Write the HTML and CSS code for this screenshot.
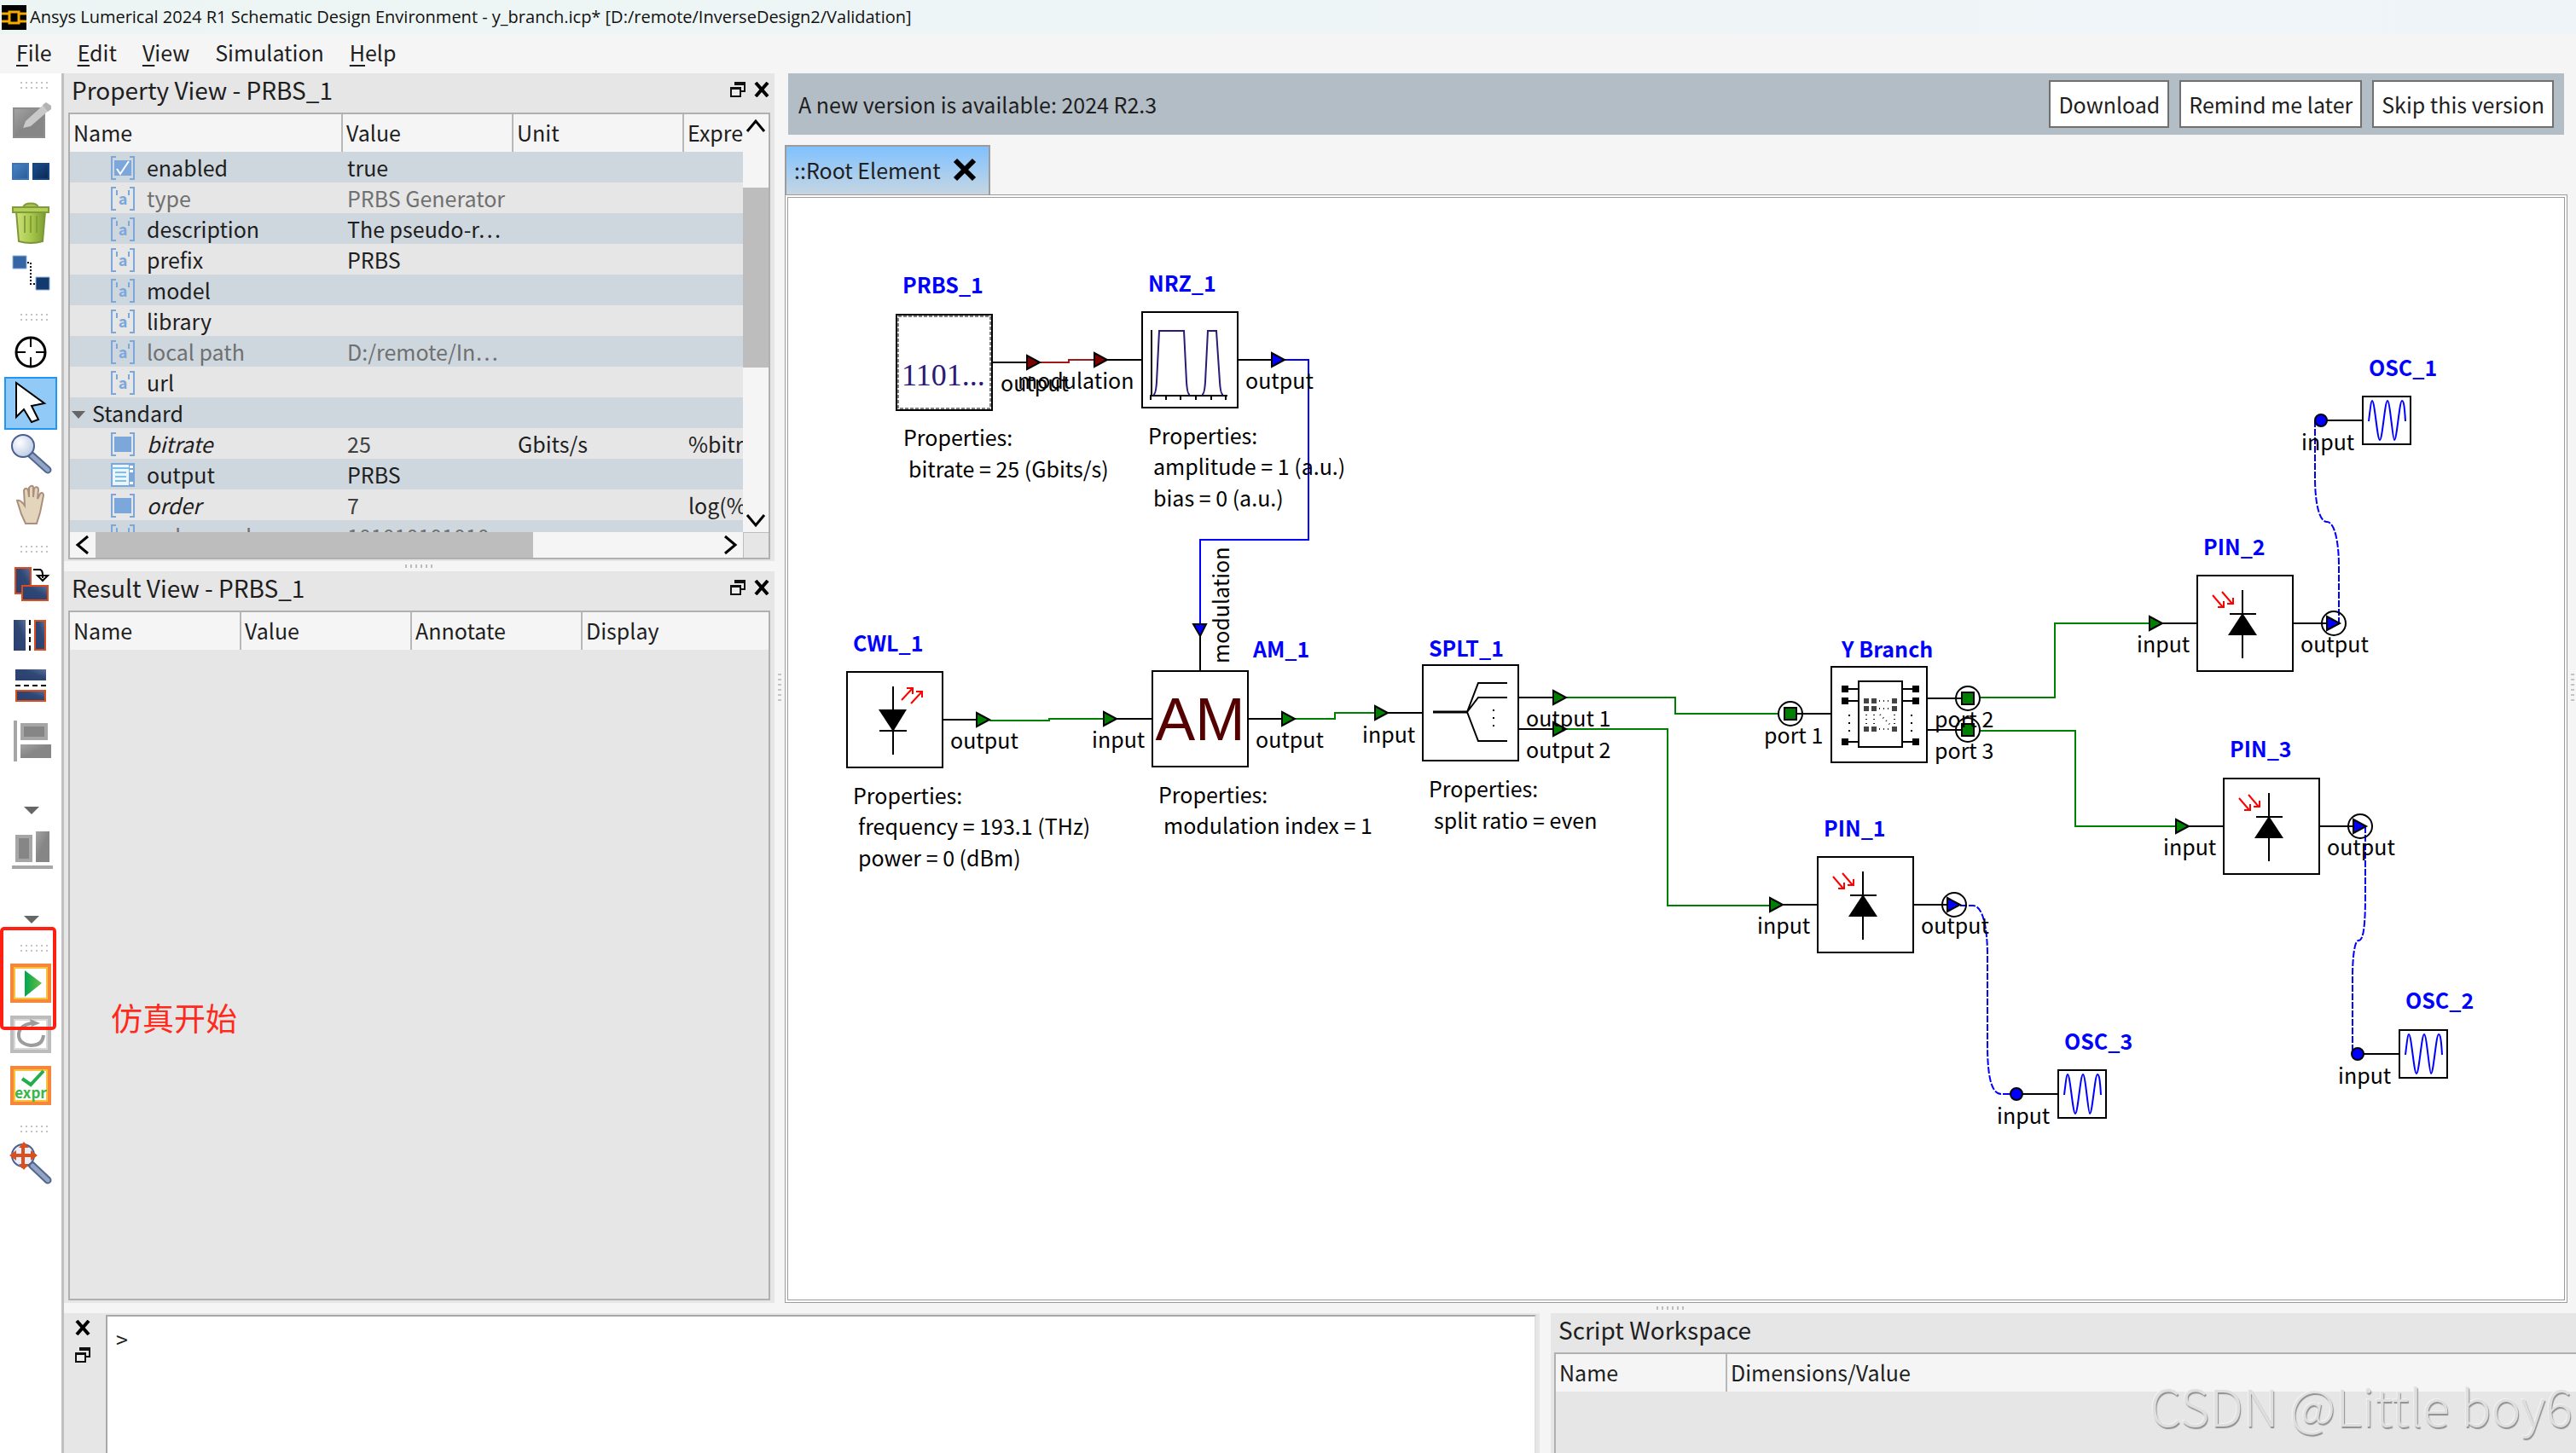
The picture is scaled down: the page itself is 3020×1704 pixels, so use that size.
FILE: index.html
```html
<!DOCTYPE html>
<html lang="en">
<head>
<meta charset="utf-8">
<title>Ansys Lumerical 2024 R1 Schematic Design Environment</title>
<link rel="stylesheet" href="styles.css">
</head>
<body>
<svg class="sprite" aria-hidden="true">
  <defs>
    <linearGradient id="g-blue-light" x1="0" y1="0" x2="1" y2="1"><stop offset="0" stop-color="#4a86c8"/><stop offset="1" stop-color="#2b5a97"/></linearGradient>
    <linearGradient id="g-blue-dark" x1="0" y1="0" x2="1" y2="1"><stop offset="0" stop-color="#1c4f8f"/><stop offset="1" stop-color="#0a2750"/></linearGradient>
    <linearGradient id="g-navy" x1="0" y1="1" x2="1" y2="0"><stop offset="0" stop-color="#2a3f6e"/><stop offset="0.6" stop-color="#2f4775"/><stop offset="1" stop-color="#5b7098"/></linearGradient>
    <linearGradient id="g-grey" x1="0" y1="0" x2="1" y2="1"><stop offset="0" stop-color="#a4a4a4"/><stop offset="0.5" stop-color="#868686"/><stop offset="1" stop-color="#868686"/></linearGradient>
    <linearGradient id="g-play" x1="0" y1="0" x2="1" y2="0"><stop offset="0" stop-color="#00a651"/><stop offset="1" stop-color="#6cbf45"/></linearGradient>
    <linearGradient id="g-bin" x1="0" y1="0" x2="1" y2="0"><stop offset="0" stop-color="#cfe07a"/><stop offset="0.5" stop-color="#a9c94c"/><stop offset="1" stop-color="#7d9c33"/></linearGradient>
    <radialGradient id="g-lens" cx="0.35" cy="0.35" r="0.7"><stop offset="0" stop-color="#ffffff"/><stop offset="1" stop-color="#bccbe6"/></radialGradient>
  </defs>
  <symbol id="ico-text" viewBox="0 0 28 28">
    <path d="M6 1H1v26h5M22 1h5v26h-5" fill="none" stroke="#7ba7db" stroke-width="2"/>
    <path d="M7 4v6M21 4v6" stroke="#7ba7db" stroke-width="2"/>
    <text x="14" y="21" text-anchor="middle" font-size="18" font-weight="700" fill="#7ba7db">a</text>
  </symbol>
  <symbol id="ico-num" viewBox="0 0 28 28">
    <path d="M6 1H1v26h5M22 1h5v26h-5" fill="none" stroke="#7ba7db" stroke-width="2"/>
    <path d="M4 5h20v18H4z" fill="#7ba7db"/>
  </symbol>
  <symbol id="ico-check" viewBox="0 0 28 28">
    <path d="M6 1H1v26h5M22 1h5v26h-5" fill="none" stroke="#7ba7db" stroke-width="2"/>
    <path d="M4 5h20v18H4z" fill="#7ba7db"/>
    <path d="M7 15l4 6L21 6" fill="none" stroke="#fff" stroke-width="2"/>
  </symbol>
  <symbol id="ico-list" viewBox="0 0 28 28">
    <path d="M1 1h26v26H1z" fill="#eaf5fd" stroke="#7ba7db" stroke-width="2"/>
    <path d="M1 6h20M5 11h13M5 16h13M5 21h13" stroke="#7cc0ea" stroke-width="2"/>
    <path d="M21 1h6v26h-6z" fill="#7ba7db"/><path d="M22 3h4v3h-4zM22 8h4v3h-4zM22 22h4v3h-4z" fill="#fff"/>
  </symbol>
  <symbol id="ico-float" viewBox="0 0 18 18">
    <path d="M6 1h11v10h-5" fill="none" stroke="#111" stroke-width="2"/><path d="M5 0h13v4H5z" fill="#111"/>
    <path d="M1 7h11v10H1z" fill="#eee" stroke="#111" stroke-width="2"/><path d="M0 6h13v3H0z" fill="#111"/>
  </symbol>
  <symbol id="ico-close" viewBox="0 0 18 18"><path d="M2 1l14 16M16 1L2 17" stroke="#000" stroke-width="4"/></symbol>
  <symbol id="ico-chev" viewBox="0 0 24 24"><path d="M2 18L12 6l10 12" fill="none" stroke="#000" stroke-width="3"/></symbol>
</svg>

<header class="titlebar">
  <svg width="29" height="29" viewBox="0 0 29 29" aria-hidden="true"><path d="M0 0h29v29H0z"/><path d="M0 10h8M0 19h8M21 10h8M21 19h8" stroke="#f5a800" stroke-width="3"/><path d="M9 8h11v13H9z" fill="#000" stroke="#f5a800" stroke-width="3"/></svg>
  <span>Ansys Lumerical 2024 R1 Schematic Design Environment - y_branch.icp* [D:/remote/InverseDesign2/Validation]</span>
</header>
<nav class="menubar">
  <button><u>F</u>ile</button><button><u>E</u>dit</button><button><u>V</u>iew</button><button>Simulation</button><button><u>H</u>elp</button>
</nav>

<div class="workspace">
  <aside class="toolbar" aria-label="Tools">
    <div class="group">
      <span class="grip"></span>
      <button aria-label="Edit"><svg viewBox="0 0 60 60"><path d="M10 16h36v34H10z" fill="url(#g-grey)" stroke="#8d8d8d" stroke-width="2"/><path d="M21 39l3-8 22-20 7 6-23 20z" fill="#c9c9c9"/><path d="M44 12l4-3 6 4 0 4-4 3z" fill="#b3b3b3"/></svg></button>
      <button aria-label="Duplicate"><svg viewBox="0 0 60 60"><path d="M9 21h18v18H9z" fill="url(#g-blue-light)" stroke="#3b73b5" stroke-width="2"/><path d="M33 21h18v18H33z" fill="url(#g-blue-dark)" stroke="#174482" stroke-width="2"/></svg></button>
      <button aria-label="Delete"><svg viewBox="0 0 60 60"><path d="M21 12c2-6 16-6 18 0z" fill="#a9c257" stroke="#7f9b3a" stroke-width="2"/><path d="M13 17h34l-3 35q-14 4-28 0z" fill="url(#g-bin)" stroke="#7a9636" stroke-width="2"/><path d="M9 12h42v6H9z" fill="#b4cf58" stroke="#7f9b3a" stroke-width="2"/><path d="M23 22v20M30 22v20M37 22v20" stroke="#83a038" stroke-width="2"/></svg></button>
      <button aria-label="Connect"><svg viewBox="0 0 60 60"><path d="M9 9h16v15H9z" fill="#3465a4" stroke="#8fb0da" stroke-width="1"/><path d="M36 34h16v15H36z" fill="#123a6e" stroke="#8fb0da" stroke-width="1"/><path d="M26 17h4v25h6" fill="none" stroke="#111" stroke-width="2" stroke-dasharray="2 2"/></svg></button>
    </div>
    <div class="group">
      <span class="grip"></span>
      <button aria-label="Center"><svg viewBox="0 0 60 60"><circle cx="30" cy="30" r="17" fill="#fff" stroke="#000" stroke-width="3"/><path d="M30 13v11M30 36v11M13 30h11M36 30h11" stroke="#000" stroke-width="2"/></svg></button>
      <button class="selected" aria-label="Select"><svg viewBox="0 0 60 60"><path d="M13 6v40l9-9 9 15 8-3-8-16 15-3z" fill="#fff" stroke="#000" stroke-width="2"/></svg></button>
      <button aria-label="Zoom"><svg viewBox="0 0 60 60"><path d="M30 30l20 18" stroke="#51678f" stroke-width="9" stroke-linecap="round"/><path d="M31 31l19 17" stroke="#93a4c4" stroke-width="5" stroke-linecap="round"/><circle cx="21" cy="20" r="13" fill="url(#g-lens)" stroke="#4a618e" stroke-width="2"/></svg></button>
      <button aria-label="Pan"><svg viewBox="0 0 60 60"><path d="M14 24c4-1 7 3 9 6l-1-18c1-3 4-3 5 0l1 8V9c2-3 5-3 5 0v11l1-10c2-3 5-2 5 1l-1 11 3-6c2-2 4-1 4 2l-4 20-4 13H24l-5-11z" fill="#e3d5bb" stroke="#ab8f7c" stroke-width="2"/></svg></button>
    </div>
    <div class="group">
      <span class="grip"></span>
      <button aria-label="Rotate"><svg viewBox="0 0 60 60"><path d="M12 11h18v30H12z" fill="url(#g-navy)" stroke="#dc4c1c" stroke-width="2"/><path d="M20 32h30v17H20z" fill="url(#g-navy)" stroke="#dc4c1c" stroke-width="2"/><path d="M33 13h8q3 1 3 6v4M38 20l6 6 6-6z" fill="none" stroke="#000" stroke-width="2"/></svg></button>
      <button aria-label="Flip horizontal"><svg viewBox="0 0 60 60"><path d="M10 12h14v36H10z" fill="url(#g-navy)"/><path d="M35 13h12v34H35z" fill="url(#g-navy)" stroke="#dc4c1c" stroke-width="2"/><path d="M29 12v36" stroke="#000" stroke-width="2" stroke-dasharray="6 4"/></svg></button>
      <button aria-label="Flip vertical"><svg viewBox="0 0 60 60"><path d="M12 10h36v13H12z" fill="url(#g-navy)"/><path d="M13 35h34v12H13z" fill="url(#g-navy)" stroke="#dc4c1c" stroke-width="2"/><path d="M12 29h36" stroke="#000" stroke-width="2" stroke-dasharray="6 4"/></svg></button>
      <button class="tall" aria-label="Align left"><svg viewBox="0 0 60 128"><path d="M10 10h4v48h-4z" fill="#a6a6a6"/><path d="M20 15h28v16H20z" fill="#868686" stroke="#a6a6a6" stroke-width="4"/><path d="M18 38h36v16H18z" fill="url(#g-grey)"/><path d="M22 111h18l-9 9z" fill="#666"/></svg></button>
      <button class="tall" aria-label="Align bottom"><svg viewBox="0 0 60 128"><path d="M14 18h16v28H14z" fill="#868686" stroke="#a6a6a6" stroke-width="4"/><path d="M36 12h16v36H36z" fill="url(#g-grey)"/><path d="M8 52h48v4H8z" fill="#a6a6a6"/><path d="M22 111h18l-9 9z" fill="#666"/></svg></button>
    </div>
    <div class="group run-group">
      <span class="grip"></span>
      <button aria-label="Run"><svg viewBox="0 0 60 60"><path d="M8 9h44v42H8z" fill="#fff" stroke="#f5863a" stroke-width="4"/><path d="M11 12h38v36H11z" fill="none" stroke="#fcc23a" stroke-width="2"/><path d="M23 15l20 15-20 16z" fill="url(#g-play)"/></svg></button>
      <button aria-label="Refresh"><svg viewBox="0 0 60 60"><path d="M8 10h44v40H8z" fill="#fff" stroke="#bcbcbc" stroke-width="4"/><path d="M11 13h38v34H11z" fill="none" stroke="#d9d9d9" stroke-width="2"/><path d="M45 31q-1 12-15 12-15-2-14-14 2-10 15-12" fill="none" stroke="#9c9c9c" stroke-width="4"/><path d="M29 12l12 5-10 4z" fill="#9c9c9c"/></svg></button>
      <button aria-label="Check expressions"><svg viewBox="0 0 60 60"><path d="M8 9h44v42H8z" fill="#fff" stroke="#f5863a" stroke-width="4"/><path d="M11 12h38v36H11z" fill="none" stroke="#fcc23a" stroke-width="2"/><path d="M20 22l10 7 15-16" fill="none" stroke="#23ad4b" stroke-width="4"/><text x="30" y="45" text-anchor="middle" font-size="17" font-weight="700" fill="#39b54a">expr</text></svg></button>
      <span class="callout"></span>
    </div>
    <div class="group">
      <span class="grip"></span>
      <button aria-label="Zoom to fit"><svg viewBox="0 0 60 60"><path d="M31 31l19 18" stroke="#51678f" stroke-width="9" stroke-linecap="round"/><path d="M32 32l18 17" stroke="#93a4c4" stroke-width="5" stroke-linecap="round"/><circle cx="21" cy="20" r="13" fill="#e8eefb" stroke="#4a618e" stroke-width="2"/><path d="M8 20h28M21 7v28" stroke="#d94f1e" stroke-width="4"/><path d="M5 20l8-6v12zM38 20l-8-6v12zM22 4l-6 7h12zM22 37l-6-7h12z" fill="#d94f1e"/></svg></button>
    </div>
  </aside>

  <div class="stage">
    <div class="upper">
      <div class="docks">
        <section class="dock property">
          <header><h2>Property View - PRBS_1</h2><button aria-label="Float"><svg><use href="#ico-float"/></svg></button><button aria-label="Close"><svg><use href="#ico-close"/></svg></button></header>
          <div class="tree">
            <div class="rows">
              <table>
                <colgroup><col class="c-name"><col class="c-mid"><col class="c-mid"><col></colgroup>
                <thead><tr><th>Name</th><th>Value</th><th>Unit</th><th>Expre</th></tr></thead>
                <tbody>
                  <tr><td><svg><use href="#ico-check"/></svg>enabled</td><td>true</td><td></td><td></td></tr>
                  <tr class="dim"><td><svg><use href="#ico-text"/></svg>type</td><td>PRBS Generator</td><td></td><td></td></tr>
                  <tr><td><svg><use href="#ico-text"/></svg>description</td><td>The pseudo-r…</td><td></td><td></td></tr>
                  <tr><td><svg><use href="#ico-text"/></svg>prefix</td><td>PRBS</td><td></td><td></td></tr>
                  <tr><td><svg><use href="#ico-text"/></svg>model</td><td></td><td></td><td></td></tr>
                  <tr><td><svg><use href="#ico-text"/></svg>library</td><td></td><td></td><td></td></tr>
                  <tr class="dim"><td><svg><use href="#ico-text"/></svg>local path</td><td>D:/remote/In…</td><td></td><td></td></tr>
                  <tr><td><svg><use href="#ico-text"/></svg>url</td><td></td><td></td><td></td></tr>
                  <tr class="section"><td colspan="4">Standard</td></tr>
                  <tr class="expr"><td><svg><use href="#ico-num"/></svg><i>bitrate</i></td><td>25</td><td>Gbits/s</td><td>%bitrate%</td></tr>
                  <tr><td><svg><use href="#ico-list"/></svg>output</td><td>PRBS</td><td></td><td></td></tr>
                  <tr class="expr"><td><svg><use href="#ico-num"/></svg><i>order</i></td><td>7</td><td></td><td>log(%</td></tr>
                  <tr class="dim"><td><svg><use href="#ico-text"/></svg>order mode</td><td>101010101010</td><td></td><td></td></tr>
                </tbody>
              </table>
            </div>
            <div class="vbar"><svg><use href="#ico-chev"/></svg><span class="thumb"></span><svg class="down"><use href="#ico-chev"/></svg></div>
            <div class="hbar"><svg class="left"><use href="#ico-chev"/></svg><span class="thumb"></span><svg class="right"><use href="#ico-chev"/></svg></div>
            <div class="corner"></div>
          </div>
        </section>
        <div class="splitter"><span class="dots"></span></div>
        <section class="dock result">
          <header><h2>Result View - PRBS_1</h2><button aria-label="Float"><svg><use href="#ico-float"/></svg></button><button aria-label="Close"><svg><use href="#ico-close"/></svg></button></header>
          <div class="frame">
            <table>
              <colgroup><col class="c-mid"><col class="c-mid"><col class="c-mid"><col></colgroup>
              <thead><tr><th>Name</th><th>Value</th><th>Annotate</th><th>Display</th></tr></thead>
            </table>
            <p class="note" lang="zh">仿真开始</p>
          </div>
        </section>
      </div>
      <div class="vsplit"><span class="vdots"></span></div>
      <main class="editor">
        <div class="notice"><p>A new version is available: 2024 R2.3</p><button>Download</button><button>Remind me later</button><button>Skip this version</button></div>
        <div class="tabs"><div class="tab">::Root Element<button aria-label="Close tab"><svg viewBox="0 0 28 28"><path d="M3 3l22 22M25 3L3 25" stroke="#000" stroke-width="6"/></svg></button></div></div>
        <div class="canvas">
          <svg class="schematic" role="img" aria-label="Schematic">
            <defs>
              <path id="arrow" d="M0 -8L15 0L0 8z" stroke="#000" stroke-width="2"/>
              <g id="box"><path d="M0 0h112v112H0z" fill="#fff" stroke="#000" stroke-width="2"/></g>
              <g id="port"><circle r="14" fill="none" stroke="#000" stroke-width="2"/><path d="M-7 -7H7V7H-7z" fill="#008000" stroke="#000" stroke-width="2"/></g>
              <g id="pin">
                <use href="#box"/>
                <path d="M53 17v80M38 45h31M-42 56H0M112 56h41" stroke="#000" stroke-width="2"/>
                <path d="M53 44l17 26H36z"/>
                <path d="M18 23l12 14M24 37h7v-7M29 19l12 14M35 33h7v-7" fill="none" stroke="#f00" stroke-width="2"/>
                <use href="#arrow" x="-56" y="56" fill="#008000"/>
                <use href="#arrow" x="152" y="56" fill="#00f"/>
                <circle cx="160" cy="56" r="14" fill="none" stroke="#000" stroke-width="2"/>
                <text x="-71" y="90">input</text><text x="121" y="90">output</text>
              </g>
              <g id="osc">
                <path d="M0 0h56v56H0zM-49 28H0" fill="#fff" stroke="#000" stroke-width="2"/>
                <circle cx="-49" cy="28" r="7" fill="#00f" stroke="#000" stroke-width="2"/>
                <path d="M7 29C9 12 10 5 11 5C14 5 17 51 20 51C23 51 26 5 29 5C32 5 35 51 37 51C40 51 43 5 46 5C48 5 49 12 50 29" fill="none" stroke="#00f" stroke-width="2"/>
                <text x="-72" y="63">input</text>
              </g>
            </defs>
            <g transform="translate(-924 -232)">
              <!-- wires -->
              <g class="wire">
                <path class="digital" d="M1218 425H1253V422H1284"/>
                <path class="electric" d="M1506 422H1534V633H1407V732"/>
                <path class="optic" d="M1160 845H1230V843H1295M1518 843H1565V836H1612M1836 818H1964V837H2085M1836 855H1955V1062H2076M2321 818H2409V731H2520M2321 857H2433V969H2551"/>
                <path class="electric dash" d="M2714 493V560C2714 590 2719 612 2728 612C2738 612 2742 640 2742 664V731"/>
                <path class="electric dash" d="M2773 969V1050C2773 1085 2771 1103 2765 1103C2760 1103 2758 1125 2758 1146V1235"/>
                <path class="electric dash" d="M2298 1062H2313C2325 1062 2330 1090 2330 1120V1225C2330 1260 2334 1283 2346 1283H2360"/>
              </g>

              <!-- PRBS_1 -->
              <use href="#box" x="1051" y="369"/>
              <path d="M1053 371h108v108h-108z" fill="none" stroke="#000" stroke-width="1" stroke-dasharray="4 2"/>
              <text class="bits" x="1057" y="452">1101...</text>
              <path class="lead" d="M1163 425h42"/><use href="#arrow" x="1204" y="425" fill="#800000"/>
              <text class="name" x="1058" y="344">PRBS_1</text>
              <text x="1173" y="459">output</text>
              <text x="1059" y="523">Properties:</text><text x="1065" y="560">bitrate = 25 (Gbits/s)</text>

              <!-- NRZ_1 -->
              <use href="#box" x="1339" y="366"/>
              <path d="M1350 387v78M1348 464h91M1349 464v5M1367 464v5M1384 464v5M1402 464v5M1420 464v5M1437 464v5" stroke="#000" stroke-width="2"/>
              <path d="M1352 463Q1355 463 1356 448L1359 388H1388L1391 448Q1392 463 1395 463M1409 463Q1412 463 1413 448L1416 388H1426L1430 448Q1431 463 1434 463" fill="none" stroke="#2c1a78" stroke-width="2"/>
              <path class="lead" d="M1298 422h41M1451 422h42"/><use href="#arrow" x="1283" y="422" fill="#800000"/><use href="#arrow" x="1491" y="422" fill="#00f"/>
              <text class="name" x="1346" y="342">NRZ_1</text>
              <text x="1193" y="456">modulation</text><text x="1460" y="456">output</text>
              <text x="1346" y="521">Properties:</text><text x="1352" y="557">amplitude = 1 (a.u.)</text><text x="1352" y="594">bias = 0 (a.u.)</text>

              <!-- CWL_1 -->
              <use href="#box" x="993" y="788"/>
              <path d="M1047 805v80M1031 857h32" stroke="#000" stroke-width="2"/><path d="M1030 832h33l-16 26z"/>
              <path d="M1057 821l13 -14M1063 807h7v7M1068 825l13 -14M1074 811h7v7" fill="none" stroke="#f00" stroke-width="2"/>
              <path class="lead" d="M1105 844h42"/><use href="#arrow" x="1145" y="844" fill="#008000"/>
              <text class="name" x="1000" y="764">CWL_1</text><text x="1114" y="878">output</text>
              <text x="1000" y="943">Properties:</text><text x="1006" y="979">frequency = 193.1 (THz)</text><text x="1006" y="1016">power = 0 (dBm)</text>

              <!-- AM_1 -->
              <use href="#box" x="1351" y="787"/>
              <text class="am" x="1407" y="868" text-anchor="middle">AM</text>
              <path class="lead" d="M1407 745v42M1309 843h42M1463 843h42"/>
              <path d="M1399 732h15l-7 14z" fill="#00f" stroke="#000" stroke-width="2"/>
              <use href="#arrow" x="1294" y="843" fill="#008000"/><use href="#arrow" x="1503" y="843" fill="#008000"/>
              <text transform="translate(1441 778) rotate(-90)">modulation</text>
              <text class="name" x="1469" y="771">AM_1</text><text x="1280" y="877">input</text><text x="1472" y="877">output</text>
              <text x="1358" y="942">Properties:</text><text x="1364" y="978">modulation index = 1</text>

              <!-- SPLT_1 -->
              <use href="#box" x="1668" y="780"/>
              <path d="M1680 835h41" stroke="#000" stroke-width="3"/>
              <path d="M1720 835L1733 801H1767M1720 835L1733 818H1767M1720 835L1733 869H1767" fill="none" stroke="#000" stroke-width="2"/>
              <path d="M1750 832h2v2h-2zM1750 841h2v2h-2zM1750 850h2v2h-2z"/>
              <path class="lead" d="M1627 836h41M1780 818h42M1780 855h42"/>
              <use href="#arrow" x="1612" y="836" fill="#008000"/><use href="#arrow" x="1821" y="818" fill="#008000"/><use href="#arrow" x="1821" y="855" fill="#008000"/>
              <text class="name" x="1675" y="770">SPLT_1</text><text x="1597" y="871">input</text>
              <text x="1789" y="852">output 1</text><text x="1789" y="889">output 2</text>
              <text x="1675" y="935">Properties:</text><text x="1681" y="972">split ratio = even</text>

              <!-- Y Branch -->
              <use href="#box" x="2147" y="782"/>
              <path d="M2179 799h51v77h-51z" fill="none" stroke="#000" stroke-width="2"/>
              <path d="M2163 808h16M2163 822h16M2163 870h16M2230 808h16M2230 822h16M2230 870h16" stroke="#000" stroke-width="2"/>
              <path d="M2159 804h8v8h-8zM2159 818h8v8h-8zM2159 866h8v8h-8zM2242 804h8v8h-8zM2242 818h8v8h-8zM2242 866h8v8h-8z"/>
              <path d="M2185 819h6v6h-6zM2194 819h6v6h-6zM2218 819h6v6h-6zM2185 828h6v6h-6zM2194 828h6v6h-6zM2218 828h6v6h-6zM2185 852h6v6h-6zM2194 852h6v6h-6zM2218 852h6v6h-6z" fill="#444"/>
              <path d="M2203 822h14M2203 831h14M2203 855h14M2188 838v13M2197 838v13M2221 838v13M2204 838l12 12" stroke="#222" stroke-width="2" stroke-dasharray="1 4"/>
              <path d="M2168 838v20M2241 838v20" stroke="#000" stroke-width="2" stroke-dasharray="2 7"/>
              <path class="lead" d="M2106 837h41M2259 819h42M2259 856h42"/>
              <use href="#port" x="2099" y="837"/><use href="#port" x="2307" y="819"/><use href="#port" x="2307" y="856"/>
              <text class="name" x="2159" y="771">Y Branch</text><text x="2068" y="872">port 1</text>
              <text x="2268" y="853">port 2</text><text x="2268" y="890">port 3</text>

              <!-- detectors and oscilloscopes -->
              <use href="#pin" x="2131" y="1005"/><text class="name" x="2138" y="981">PIN_1</text>
              <use href="#pin" x="2576" y="675"/><text class="name" x="2583" y="651">PIN_2</text>
              <use href="#pin" x="2607" y="913"/><text class="name" x="2614" y="888">PIN_3</text>
              <use href="#osc" x="2770" y="465"/><text class="name" x="2777" y="441">OSC_1</text>
              <use href="#osc" x="2813" y="1208"/><text class="name" x="2820" y="1183">OSC_2</text>
              <use href="#osc" x="2413" y="1255"/><text class="name" x="2420" y="1231">OSC_3</text>
            </g>
          </svg>
        </div>
      </main>
    </div>
    <div class="splitter wide"><span class="dots"></span></div>
    <div class="lower">
      <section class="dock prompt">
        <div class="side"><button aria-label="Close"><svg><use href="#ico-close"/></svg></button><button aria-label="Float"><svg><use href="#ico-float"/></svg></button></div>
        <textarea aria-label="Script prompt" spellcheck="false">&gt;</textarea>
      </section>
      <section class="dock script">
        <header><h2>Script Workspace</h2></header>
        <div class="frame">
          <table>
            <colgroup><col class="c-mid"><col></colgroup>
            <thead><tr><th>Name</th><th>Dimensions/Value</th></tr></thead>
          </table>
        </div>
      </section>
      <p class="watermark">CSDN @Little boy6</p>
    </div>
  </div>
  <div class="edge"><span class="vdots"></span></div>
</div>
</body>
</html>
```
FILE: styles.css
```css
* { box-sizing: border-box; }

body {
  margin: 0;
  height: 100vh;
  display: flex;
  flex-direction: column;
  overflow: hidden;
  background: #f5f5f5;
  color: #1e1e1e;
  font: 25px/36px "Noto Sans CJK SC", "Noto Sans", sans-serif;
}

h2, p { margin: 0; font-weight: 400; }

button {
  font: inherit;
  color: inherit;
  background: none;
  border: 0;
  padding: 0;
}

svg { display: block; }
.sprite { position: absolute; width: 0; height: 0; }

/* title and menu */
.titlebar {
  display: flex;
  align-items: center;
  gap: 4px;
  height: 40px;
  padding-left: 2px;
  background: linear-gradient(90deg, #edf5f4, #eff4f8);
  color: #111;
  font: 20px/40px "Open Sans", sans-serif;
  white-space: nowrap;
}

.menubar {
  display: flex;
  gap: 30px;
  height: 46px;
  padding-left: 19px;
  line-height: 42px;
}

.menubar button { height: 42px; }
.menubar u { text-decoration-thickness: 2px; text-underline-offset: 4px; }

.workspace { position: relative; display: flex; flex: 1; min-height: 0; }

/* toolbar */
.toolbar {
  width: 75px;
  background: #fff;
  border-right: 3px solid #c0c0c0;
}

.group {
  display: flex;
  flex-direction: column;
  align-items: center;
  padding: 10px 0 7px;
}

.grip {
  width: 32px;
  height: 8px;
  margin: 0 0 7px 8px;
  background:
    repeating-linear-gradient(90deg, #c4c4c4 0 2px, transparent 2px 6px) 0 0 / 100% 2px no-repeat,
    repeating-linear-gradient(90deg, #c4c4c4 0 2px, transparent 2px 6px) 0 6px / 100% 2px no-repeat;
}

.group button { width: 60px; height: 60px; }
.group button svg { width: 60px; height: 60px; }
.group .tall, .group .tall svg { height: 128px; }
.group .selected { background: #91c9f7; outline: 2px solid #2196f3; outline-offset: -1px; }
.run-group { position: relative; }

.callout {
  position: absolute;
  left: 0;
  top: -11px;
  width: 66px;
  height: 121px;
  border: 4px solid #ff2012;
  border-radius: 5px;
}

/* dock layout */
.stage { flex: 1; min-width: 0; display: flex; flex-direction: column; }
.upper { flex: 1; min-height: 0; display: flex; }
.docks { width: 833px; display: flex; flex-direction: column; }
.dock { background: #e6e6e6; }

.dock header {
  display: flex;
  align-items: center;
  gap: 10px;
  height: 46px;
  padding: 0 6px 8px 9px;
}

.dock h2 { flex: 1; font-size: 28px; line-height: 38px; }
.dock header svg, .side svg { width: 18px; height: 18px; }

.property { height: 572px; }
.result { flex: 1; display: flex; flex-direction: column; padding-bottom: 3px; }

.splitter {
  height: 12px;
  display: flex;
  align-items: center;
  justify-content: center;
}

.splitter.wide { padding-left: 822px; }

.dots {
  width: 34px;
  height: 4px;
  background: repeating-linear-gradient(90deg, #bdbdbd 0 2px, transparent 2px 6px);
}

.vsplit { width: 12px; display: flex; align-items: center; justify-content: center; }
.vdots { width: 4px; height: 34px; background: repeating-linear-gradient(#c4c4c4 0 2px, transparent 2px 6px); }

.edge {
  position: absolute;
  right: 2px;
  top: 0;
  bottom: 176px;
  display: flex;
  align-items: center;
}

/* tables */
table { width: 100%; border-collapse: collapse; table-layout: fixed; }

th {
  height: 44px;
  padding: 0 0 2px 4px;
  background: #f5f5f5;
  font-weight: 400;
  text-align: left;
  white-space: nowrap;
}

th + th { border-left: 2px solid #b8b8b8; }

td {
  height: 36px;
  padding: 0 0 0 6px;
  white-space: nowrap;
  overflow: hidden;
}

td:first-child { padding-left: 48px; }
td svg { display: inline-block; width: 28px; height: 28px; margin-right: 14px; vertical-align: -4px; }
tbody tr:nth-child(odd) { background: #ced7dd; }
.dim td { color: #707070; }
.expr td:nth-child(2) { color: #404040; }
.section td:first-child { padding-left: 2px; }

.section td::before {
  content: "";
  display: inline-block;
  margin-right: 8px;
  border: 8px solid transparent;
  border-top: 9px solid #666;
  border-bottom: 0;
  vertical-align: 4px;
}

.c-name { width: 319px; }
.c-mid { width: 200px; }

.tree, .frame { border: 2px solid #b0b0b0; }

.tree {
  display: grid;
  grid-template: 490px 30px / 1fr 30px;
  margin: 0 5px;
}

.rows { overflow: hidden; }
.vbar { position: relative; display: flex; flex-direction: column; justify-content: space-between; align-items: center; background: #f5f5f5; padding: 2px 0; }
.vbar svg { width: 26px; height: 24px; }
.down { transform: rotate(180deg); }
.vbar .thumb { position: absolute; left: 0; right: 0; top: 86px; height: 43%; background: #bdbdbd; }

.hbar { display: flex; align-items: center; background: #f5f5f5; }
.hbar svg { width: 30px; height: 24px; }
.hbar .left { transform: rotate(-90deg); }
.hbar .right { transform: rotate(90deg); margin-left: auto; }
.hbar .thumb { width: 65%; height: 30px; background: #bdbdbd; }
.corner { border: 2px solid #bdbdbd; border-width: 1px 0 0 1px; }

.result .frame { flex: 1; margin: 0 5px; position: relative; }

/* red annotation laid over the dock */
.note {
  position: absolute;
  left: 48px;
  top: 448px;
  color: #ff2a1c;
  font-size: 37px;
  line-height: 54px;
}

/* editor */
.editor {
  flex: 1;
  min-width: 0;
  display: flex;
  flex-direction: column;
  padding-right: 10px;
}

.notice {
  display: flex;
  align-items: center;
  gap: 12px;
  height: 72px;
  margin: 0 4px;
  padding: 0 12px;
  background: #b3bdc6;
}

.notice p { flex: 1; }

.notice button {
  height: 56px;
  padding: 0 9px;
  background: #fff;
  border: 2px solid #707070;
}

.tabs { display: flex; padding-top: 12px; }

.tab {
  display: flex;
  align-items: center;
  gap: 14px;
  height: 58px;
  padding: 0 14px 2px 9px;
  background: linear-gradient(#80c1ff, #c6d6e2);
  border: 2px solid #9c9c9c;
  border-bottom: 0;
}

.tab svg { width: 28px; height: 28px; }

.canvas {
  flex: 1;
  min-height: 0;
  overflow: hidden;
  background: #fff;
  border: 4px double #9c9c9c;
}

.schematic { width: 100%; height: 100%; fill: #000; }
.wire path { fill: none; stroke-width: 2; }
.wire .digital { stroke: #a01818; }
.wire .electric { stroke: #0000ff; }
.wire .optic { stroke: #008000; }
.wire .dash { stroke-dasharray: 8 2; }
.lead { stroke: #000; stroke-width: 2; }
.name { fill: #0000ff; font-weight: 700; }
.bits { fill: #2c1a78; font: 36px "Liberation Serif", serif; }
.am { fill: #550000; font: 70px "Liberation Sans", sans-serif; }

/* bottom docks */
.lower { position: relative; display: flex; gap: 13px; height: 164px; }
.prompt { flex: 1730; display: flex; }
.side { display: flex; flex-direction: column; align-items: center; gap: 14px; width: 49px; padding: 8px 5px 0 0; }
.side button { height: 18px; }

.prompt textarea {
  flex: 1;
  margin: 2px 4px 0 0;
  padding: 8px 10px;
  border: 2px solid #a8a8a8;
  border-right-color: #e0e0e0;
  border-bottom: 0;
  background: #fff;
  color: inherit;
  font: inherit;
  resize: none;
}

.script { flex: 1202; display: flex; flex-direction: column; }
.script .frame { flex: 1; margin-left: 4px; border-right: 0; border-bottom: 0; }

.watermark {
  position: absolute;
  right: 4px;
  bottom: 14px;
  color: #dedede;
  font-size: 59px;
  line-height: 84px;
  font-weight: 300;
  text-shadow: 1px 2px 1px #909090, -1px -1px 0 #f2f2f2;
}
```
